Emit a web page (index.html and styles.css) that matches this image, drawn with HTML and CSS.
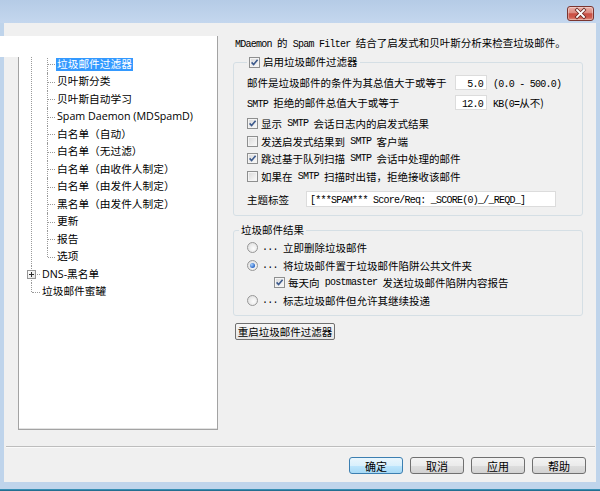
FILE: index.html
```html
<!DOCTYPE html>
<html lang="zh-CN">
<head>
<meta charset="utf-8">
<title>MDaemon Spam Filter</title>
<link rel="stylesheet" href="styles.css">
</head>
<body>
<div class="window">
  <div class="titlebar">
    <div class="close">
      <svg width="25" height="13" viewBox="0 0 25 13"><path d="M9 3 L16 10 M16 3 L9 10" stroke="#6a2a24" stroke-width="3.4" stroke-linecap="square"/><path d="M9 3 L16 10 M16 3 L9 10" stroke="#ffffff" stroke-width="1.8" stroke-linecap="square"/></svg>
    </div>
  </div>
  <div class="client">
    <div class="main">
      <div class="tree">
        <div class="row l1 root"><span class="lbl">垃圾邮件过滤器</span></div>
        <div class="kids">
          <div class="row l2"><span class="lbl sel">垃圾邮件过滤器</span></div>
          <div class="row l2"><span class="lbl">贝叶斯分类</span></div>
          <div class="row l2"><span class="lbl">贝叶斯自动学习</span></div>
          <div class="row l2"><span class="lbl">Spam Daemon (MDSpamD)</span></div>
          <div class="row l2"><span class="lbl">白名单（自动）</span></div>
          <div class="row l2"><span class="lbl">白名单（无过滤）</span></div>
          <div class="row l2"><span class="lbl">白名单（由收件人制定）</span></div>
          <div class="row l2"><span class="lbl">白名单（由发件人制定）</span></div>
          <div class="row l2"><span class="lbl">黑名单（由发件人制定）</span></div>
          <div class="row l2"><span class="lbl">更新</span></div>
          <div class="row l2"><span class="lbl">报告</span></div>
          <div class="row l2 last"><span class="lbl">选项</span></div>
        </div>
        <div class="row l1"><span class="plus"><svg width="7" height="7" viewBox="0 0 7 7"><path d="M1 3.5 H6 M3.5 1 V6" stroke="#2b2b2b" stroke-width="1"/></svg></span><span class="lbl">DNS-黑名单</span></div>
        <div class="row l1 last"><span class="lbl">垃圾邮件蜜罐</span></div>
      </div>

      <div class="panel">
        <p class="intro"><span class="en">MDaemon </span>的<span class="en"> Spam Filter </span>结合了启发式和贝叶斯分析来检查垃圾邮件。</p>

        <fieldset class="grp grp1">
          <legend class="lg"><span class="cb on"><svg width="9" height="9" viewBox="0 0 9 9"><path d="M1.6 4.4 L3.6 6.6 L7.6 1.8" fill="none" stroke="#3d5a8c" stroke-width="1.6"/></svg></span>启用垃圾邮件过滤器</legend>
          <div class="field"><span class="lab">邮件是垃圾邮件的条件为其总值大于或等于</span><span class="num"><span class="en">5.0</span></span><span class="unit"><span class="en">(0.0 - 500.0)</span></span></div>
          <div class="field"><span class="lab"><span class="en">SMTP </span>拒绝的邮件总值大于或等于</span><span class="num"><span class="en">12.0</span></span><span class="unit"><span class="en">KB(0=</span>从不)</span></div>
          <div class="opts">
            <div class="opt"><span class="cb on"><svg width="9" height="9" viewBox="0 0 9 9"><path d="M1.6 4.4 L3.6 6.6 L7.6 1.8" fill="none" stroke="#3d5a8c" stroke-width="1.6"/></svg></span>显示<span class="en"> SMTP </span>会话日志内的启发式结果</div>
            <div class="opt"><span class="cb"></span>发送启发式结果到<span class="en"> SMTP </span>客户端</div>
            <div class="opt"><span class="cb on"><svg width="9" height="9" viewBox="0 0 9 9"><path d="M1.6 4.4 L3.6 6.6 L7.6 1.8" fill="none" stroke="#3d5a8c" stroke-width="1.6"/></svg></span>跳过基于队列扫描<span class="en"> SMTP </span>会话中处理的邮件</div>
            <div class="opt"><span class="cb"></span>如果在<span class="en"> SMTP </span>扫描时出错，拒绝接收该邮件</div>
          </div>
          <div class="subject"><span class="lab">主题标签</span><span class="tag"><span class="en">[***SPAM*** Score/Req: _SCORE(0)_/_REQD_]</span></span></div>
        </fieldset>

        <fieldset class="grp grp2">
          <legend class="lg lg2">垃圾邮件结果</legend>
          <div class="opt"><span class="rd"></span><span class="en">... </span>立即删除垃圾邮件</div>
          <div class="opt"><span class="rd on"></span><span class="en">... </span>将垃圾邮件置于垃圾邮件陷阱公共文件夹</div>
          <div class="opt sub"><span class="cb on"><svg width="9" height="9" viewBox="0 0 9 9"><path d="M1.6 4.4 L3.6 6.6 L7.6 1.8" fill="none" stroke="#3d5a8c" stroke-width="1.6"/></svg></span>每天向<span class="en"> postmaster </span>发送垃圾邮件陷阱内容报告</div>
          <div class="opt"><span class="rd"></span><span class="en">... </span>标志垃圾邮件但允许其继续投递</div>
        </fieldset>

        <div class="restart">重启垃圾邮件过滤器</div>
      </div>
    </div>
    <div class="sep"></div>
    <div class="buttons">
      <div class="btn def">确定</div>
      <div class="btn">取消</div>
      <div class="btn">应用</div>
      <div class="btn">帮助</div>
    </div>
  </div>
  <div class="frame-gap"></div>
  <div class="edge"></div>
  <div class="glitch"></div>
</div>
</body>
</html>
```

FILE: styles.css
```css
html, body {
  margin: 0;
  padding: 0;
}

body {
  width: 600px;
  height: 491px;
  overflow: hidden;
  background: #bfd4eb;
}

.window {
  position: relative;
  width: 600px;
  height: 491px;
  background: #bfd4eb;
  font-family: "Noto Sans CJK SC", sans-serif;
  color: #000;
  overflow: hidden;
}

.titlebar {
  height: 23px;
  box-sizing: border-box;
  padding: 6px 6px 0 0;
  display: flex;
  justify-content: flex-end;
  align-items: flex-start;
  background: linear-gradient(#b5cbe6, #c4d7ee);
}

.close {
  width: 27px;
  height: 15px;
  box-sizing: border-box;
  border: 1px solid #7a3530;
  border-radius: 3px;
  background: linear-gradient(#eab0a8 0%, #dc8a80 45%, #c94e42 52%, #cf5a4d 78%, #e09080 100%);
  box-shadow: inset 0 0 0 1px rgba(255, 255, 255, 0.35);
  display: flex;
  align-items: center;
  justify-content: center;
}

.close svg {
  display: block;
}

.client {
  margin: 0 4px;
  height: 459px;
  background: #f0f0f0;
  display: flex;
  flex-direction: column;
}

.main {
  height: 423px;
  box-sizing: border-box;
  padding: 13px 0 0 14px;
  display: flex;
  align-items: flex-start;
}

/* ---------- tree ---------- */
.tree {
  width: 200px;
  height: 394px;
  box-sizing: border-box;
  padding-top: 1px;
  background: #fff;
  border: 1px solid #a3a3a3;
  box-shadow: inset 0 -1px 0 #e2e2e2;
  font-family: "Open Sans", "Noto Sans CJK SC", sans-serif;
  font-size: 10.7px;
}

.row {
  position: relative;
  height: 17.5px;
  display: flex;
  align-items: center;
  white-space: nowrap;
}

.row.l1 {
  padding-left: 22px;
}

.row.l2 {
  padding-left: 37px;
}

.lbl {
  padding: 0 1px;
  line-height: 13px;
}

.lbl.sel {
  background: #3399ff;
  color: #fff;
}

.kids {
  position: relative;
}

.kids::before,
.row.l1::before,
.row.l2::before {
  content: "";
  position: absolute;
  top: 0;
  bottom: 0;
  border-left: 1px dotted #9a9a9a;
}

.kids::before,
.row.l1::before {
  left: 12px;
}

.row.l2::before {
  left: 28px;
}

.row.root::before {
  top: 50%;
}

.row.last::before {
  bottom: 50%;
}

.row.l1::after,
.row.l2::after {
  content: "";
  position: absolute;
  top: 50%;
  border-top: 1px dotted #9a9a9a;
}

.row.l1::after {
  left: 13px;
  width: 8px;
}

.row.l2::after {
  left: 29px;
  width: 7px;
}

.plus {
  position: absolute;
  left: 8px;
  top: 4px;
  width: 9px;
  height: 9px;
  box-sizing: border-box;
  border: 1px solid #959595;
  background: linear-gradient(135deg, #ffffff, #e4e4e4);
  z-index: 1;
  display: flex;
  align-items: center;
  justify-content: center;
}

.plus svg {
  display: block;
}

/* ---------- right panel ---------- */
.panel {
  margin-left: 15px;
  width: 350px;
  font-size: 10.5px;
}

.en {
  font-family: "Liberation Mono", monospace;
  font-size: 10px;
  letter-spacing: -0.75px;
  white-space: pre;
}

.intro {
  margin: 0;
  height: 14px;
  line-height: 14px;
  padding-left: 2px;
  white-space: nowrap;
}

.grp {
  margin: 0;
  min-width: 0;
  border: 1px solid #d5dfe5;
  border-radius: 3px;
}

.grp1 {
  margin-top: 5px;
  padding: 3px 13px 8px;
}

.grp2 {
  margin-top: 7px;
  padding: 2px 13px 6px;
}

.lg {
  height: 14px;
  line-height: 14px;
  padding: 0 2px;
  display: flex;
  align-items: center;
}

.lg2 {
  margin-left: -8px;
}

.field {
  height: 20px;
  display: flex;
  align-items: center;
  white-space: nowrap;
}

.field .lab {
  width: 208px;
}

.num {
  width: 32px;
  height: 15px;
  box-sizing: border-box;
  background: #fff;
  border: 1px solid #dcdcdc;
  text-align: right;
  padding-right: 3px;
  line-height: 13px;
}

.unit {
  margin-left: 6px;
}

.opts {
  margin-top: 3px;
}

.opt {
  height: 17.5px;
  display: flex;
  align-items: center;
  white-space: nowrap;
}

.opt.sub {
  padding-left: 27px;
}

.cb {
  width: 11px;
  height: 11px;
  box-sizing: border-box;
  border: 1px solid #8e8f8f;
  margin-right: 3px;
  background: linear-gradient(135deg, #d8d8d8, #fbfbfb);
  box-shadow: inset 0 0 0 1px #f4f4f4;
  display: flex;
  align-items: center;
  justify-content: center;
  flex: none;
}

.cb svg {
  display: block;
}

.rd {
  width: 11px;
  height: 11px;
  box-sizing: border-box;
  border: 1px solid #979797;
  border-radius: 50%;
  margin-right: 4px;
  background: radial-gradient(circle at 60% 60%, #fdfdfd, #d9d9d9);
  display: flex;
  align-items: center;
  justify-content: center;
  flex: none;
}

.rd.on::after {
  content: "";
  width: 5px;
  height: 5px;
  border-radius: 50%;
  background: radial-gradient(circle at 35% 35%, #a9d3ff, #2a66c6 70%);
}

.subject {
  margin-top: 6px;
  height: 16px;
  display: flex;
  align-items: center;
}

.subject .lab {
  width: 59px;
}

.tag {
  width: 250px;
  height: 16px;
  box-sizing: border-box;
  border: 1px solid #dcdcdc;
  background: #fff;
  padding-left: 3px;
  line-height: 14px;
}

.restart {
  margin-top: 7px;
  margin-left: 2px;
  width: 100px;
  height: 17px;
  box-sizing: border-box;
  border: 1px solid #6f6f6f;
  border-radius: 2px;
  background: linear-gradient(#f6f6f6, #e6e6e6);
  display: flex;
  align-items: center;
  justify-content: center;
  white-space: nowrap;
}

/* ---------- footer ---------- */
.sep {
  margin: 0 1px 0 2px;
  border-top: 1px solid #bdbdbd;
  border-bottom: 1px solid #fafafa;
}

.buttons {
  margin-top: 9px;
  padding-right: 10px;
  display: flex;
  justify-content: flex-end;
  gap: 7px;
}

.btn {
  width: 54px;
  height: 17px;
  box-sizing: border-box;
  border: 1px solid #707070;
  border-radius: 3px;
  background: linear-gradient(#f3f3f3 0%, #ebebeb 50%, #dedede 51%, #d2d2d2 100%);
  font-size: 11px;
  display: flex;
  align-items: center;
  justify-content: center;
}

.btn.def {
  border-color: #3c7fb1;
  background: linear-gradient(#eaf6fd 0%, #d9f0fc 50%, #bee6fd 51%, #a7d9f5 100%);
}

.frame-gap {
  height: 7px;
}

.edge {
  height: 2px;
  background: linear-gradient(#3f9cc4, #1b5f80);
}

.glitch {
  position: absolute;
  left: 0;
  top: 36px;
  width: 217px;
  height: 21px;
  background: #fff;
}
```
